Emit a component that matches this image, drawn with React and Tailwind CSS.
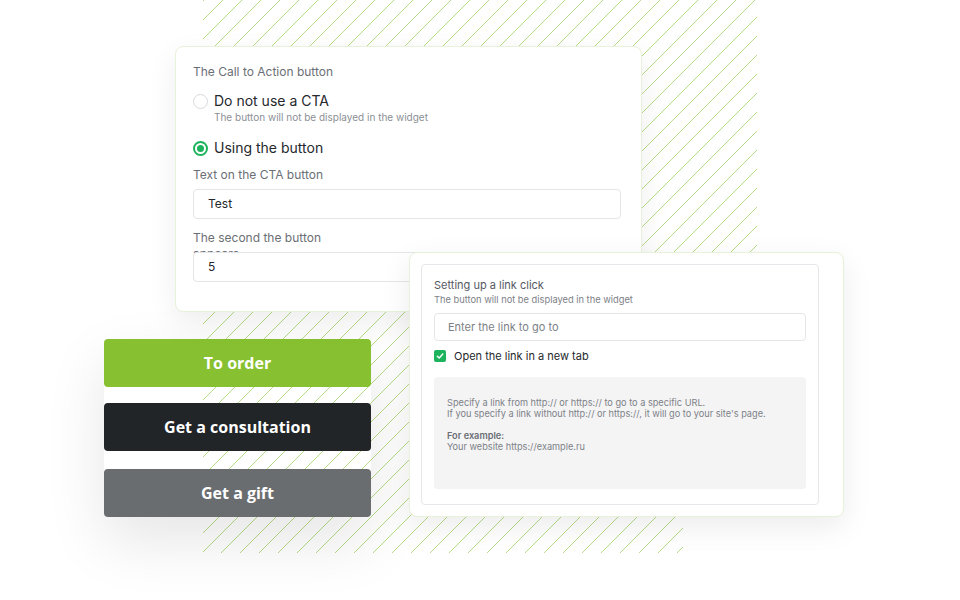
import React from "react";

function Hatch() {
  return (
    <svg width="554" height="553" className="block">
      <defs>
        <pattern id="hatch" patternUnits="userSpaceOnUse" width="19" height="19" x="0" y="1">
          <path d="M0 19 L19 0 M-2 2 L2 -2 M17 21 L21 17" stroke="#a6d267" strokeOpacity="0.8" strokeWidth="1" />
        </pattern>
      </defs>
      <polygon points="0,0 554,0 554,517 480,517 480,553 0,553" fill="url(#hatch)" />
    </svg>
  );
}

function Radio({ checked }) {
  if (checked) {
    return (
      <span className="w-[15px] h-[15px] rounded-full border-[2px] border-[#1cb35c] flex items-center justify-center shrink-0 bg-white">
        <span className="w-[7px] h-[7px] rounded-full bg-[#1cb35c]" />
      </span>
    );
  }
  return <span className="w-[15px] h-[15px] rounded-full border border-[#d7d9dd] bg-white shrink-0" />;
}

export default function App() {
  return (
    <div
      className="relative w-[960px] h-[600px] bg-white overflow-hidden"
      style={{ fontFamily: "Inter, 'Noto Sans', sans-serif" }}
    >
      {/* hatched background */}
      <div className="absolute left-[203px] top-0">
        <Hatch />
      </div>

      {/* CTA buttons */}
      <div className="absolute left-[104px] top-[339px] w-[267px] flex flex-col shadow-[0_24px_60px_rgba(0,0,0,0.10)]">
        <div
          className="h-[48px] rounded-[4px] bg-[#87c132] text-white text-[16px] font-bold flex items-center justify-center"
          style={{ fontFamily: "'Open Sans', sans-serif" }}
        >
          To order
        </div>
        <div
          className="mt-[16px] h-[48px] rounded-[4px] bg-[#222528] text-white text-[16px] font-bold flex items-center justify-center"
          style={{ fontFamily: "'Open Sans', sans-serif" }}
        >
          Get a consultation
        </div>
        <div
          className="mt-[18px] h-[48px] rounded-[4px] bg-[#6a6d70] text-white text-[16px] font-bold flex items-center justify-center"
          style={{ fontFamily: "'Open Sans', sans-serif" }}
        >
          Get a gift
        </div>
      </div>

      {/* Card 1 */}
      <div className="absolute left-[175px] top-[46px] w-[467px] h-[266px] bg-white rounded-[8px] border border-[#e8f1da] shadow-[0_10px_30px_rgba(0,0,0,0.07)] pl-[17px] pr-[20px] pt-[17px]">
        <div className="text-[12px] leading-[16px] text-[#6b6f75]">The Call to Action button</div>

        <div className="mt-[11px] flex items-center gap-[6px]">
          <Radio />
          <span className="text-[14px] leading-[20px] text-[#25282c]">Do not use a CTA</span>
        </div>
        <div className="pl-[21px] text-[10px] leading-[13px] text-[#8b8f95]">The button will not be displayed in the widget</div>

        <div className="mt-[14px] flex items-center gap-[6px]">
          <Radio checked />
          <span className="text-[14px] leading-[20px] text-[#25282c]">Using the button</span>
        </div>

        <div className="mt-[9px] text-[12px] leading-[16px] text-[#6b6f75]">Text on the CTA button</div>
        <div className="mt-[6px] h-[30px] rounded-[4px] border border-[#e3e5e8] px-[14px] flex items-center text-[12px] text-[#25282c]">
          Test
        </div>

        <div className="mt-[11px] h-[16px] w-[135px] text-[12px] leading-[16px] text-[#6b6f75]">
          The second the button appears
        </div>
        <div className="relative mt-[6px] h-[30px] rounded-[4px] border border-[#e3e5e8] bg-white px-[14px] flex items-center text-[12px] text-[#25282c]">
          5
        </div>
      </div>

      {/* Card 2 */}
      <div className="absolute left-[409px] top-[252px] w-[435px] h-[265px] bg-white rounded-[8px] border border-[#e8f1da] shadow-[0_10px_30px_rgba(0,0,0,0.08)] pl-[11px] pr-[24px] py-[11px]">
        <div className="h-full rounded-[4px] border border-[#e6e7ea] px-[12px] pt-[12px]">
          <div className="text-[11px] leading-[16px] text-[#55595f]">Setting up a link click</div>
          <div className="text-[9.3px] leading-[14px] text-[#7d8187]">The button will not be displayed in the widget</div>
          <div className="mt-[6px] h-[28px] rounded-[4px] border border-[#e3e5e8] px-[13px] flex items-center text-[11px] text-[#7d8187]">
            Enter the link to go to
          </div>
          <div className="mt-[7px] flex items-center gap-[8px] h-[16px]">
            <span className="w-[12px] h-[12px] rounded-[2px] bg-[#1cb35c] flex items-center justify-center">
              <svg width="8" height="8" viewBox="0 0 8 8">
                <path d="M1.3 4.2 L3.2 6 L6.8 2" stroke="white" strokeWidth="1.4" fill="none" strokeLinecap="round" strokeLinejoin="round" />
              </svg>
            </span>
            <span className="text-[11px] leading-[16px] text-[#25282c]">Open the link in a new tab</span>
          </div>
          <div className="mt-[13px] h-[112px] rounded-[4px] bg-[#f4f4f5] pl-[13px] pr-[4px] pt-[20px] text-[9.2px] leading-[11px] text-[#7d8187] whitespace-nowrap">
            <div>Specify a link from http:// or https:// to go to a specific URL.</div>
            <div>If you specify a link without http:// or https://, it will go to your site's page.</div>
            <div className="mt-[11px] font-semibold text-[#6b6f75]">For example:</div>
            <div>Your website https://example.ru</div>
          </div>
        </div>
      </div>
    </div>
  );
}
